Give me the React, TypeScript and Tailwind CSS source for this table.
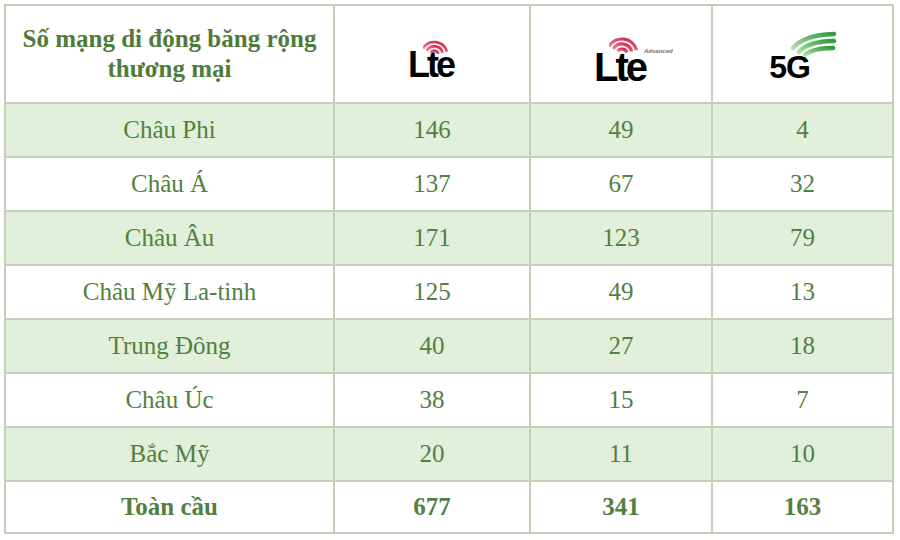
import React from "react";

interface Row {
  region: string;
  lte: number;
  lteA: number;
  g5: number;
}

const rows: Row[] = [
  { region: "Châu Phi", lte: 146, lteA: 49, g5: 4 },
  { region: "Châu Á", lte: 137, lteA: 67, g5: 32 },
  { region: "Châu Âu", lte: 171, lteA: 123, g5: 79 },
  { region: "Châu Mỹ La-tinh", lte: 125, lteA: 49, g5: 13 },
  { region: "Trung Đông", lte: 40, lteA: 27, g5: 18 },
  { region: "Châu Úc", lte: 38, lteA: 15, g5: 7 },
  { region: "Bắc Mỹ", lte: 20, lteA: 11, g5: 10 },
];

// arc path helper: center, radius, start/end angle in degrees (0 = right, 90 = up)
const arc = (cx: number, cy: number, r: number, a1: number, a2: number) => {
  const rad = (a: number) => (a * Math.PI) / 180;
  const x1 = cx + r * Math.cos(rad(a1));
  const y1 = cy - r * Math.sin(rad(a1));
  const x2 = cx + r * Math.cos(rad(a2));
  const y2 = cy - r * Math.sin(rad(a2));
  return `M${x1.toFixed(2)} ${y1.toFixed(2)} A${r} ${r} 0 0 1 ${x2.toFixed(2)} ${y2.toFixed(2)}`;
};

const LteArcs = ({ w }: { w: number }) => (
  <svg width={w} height={w * 0.8} viewBox="0 0 30 24">
    <defs>
      <linearGradient id={`lg${w}`} x1="0" y1="1" x2="1" y2="0">
        <stop offset="0" stopColor="#f39ab0" />
        <stop offset="1" stopColor="#d8163f" />
      </linearGradient>
    </defs>
    {[5, 10, 15].map((r) => (
      <path key={r} d={arc(13, 22, r, 150, 15)} stroke={`url(#lg${w})`} strokeWidth="3.2" fill="none" />
    ))}
  </svg>
);

const logoFont = { fontFamily: '"Liberation Sans", Arial, sans-serif' };

const LteLogo = () => (
  <div className="relative inline-flex flex-col items-center">
    <div className="ml-[8px] -mb-[6px]">
      <LteArcs w={26} />
    </div>
    <span className="text-[36px] leading-[30px] font-bold tracking-[-3px] text-black pr-[3px]" style={logoFont}>
      Lte
    </span>
  </div>
);

const LteAdvLogo = () => (
  <div className="relative inline-flex flex-col items-center">
    <div className="ml-[6px] -mb-[6px]">
      <LteArcs w={30} />
    </div>
    <span className="text-[40px] leading-[34px] font-bold tracking-[-3px] text-black pr-[3px]" style={logoFont}>
      Lte
    </span>
    <span className="absolute left-[50px] top-[16px] text-[6px] leading-[6px] italic text-gray-500" style={logoFont}>
      Advanced
    </span>
  </div>
);

const FiveGLogo = () => (
  <div className="relative inline-flex items-end">
    <span className="text-[32px] leading-[26px] font-bold tracking-[-1px] text-black" style={logoFont}>
      5G
    </span>
    <svg width="48" height="26" viewBox="0 0 48 26" className="absolute left-[21px] -top-[23px]">
      <defs>
        <linearGradient id="g5" x1="0" y1="1" x2="1" y2="0">
          <stop offset="0" stopColor="#b4e2ac" />
          <stop offset="1" stopColor="#2e9a3e" />
        </linearGradient>
      </defs>
      <path d="M3 17 Q14 4 44 3" stroke="url(#g5)" strokeWidth="4.5" fill="none" strokeLinecap="round" />
      <path d="M9 21 Q19 10 44 10" stroke="url(#g5)" strokeWidth="4.5" fill="none" strokeLinecap="round" />
      <path d="M15 24 Q23 17 43 17" stroke="url(#g5)" strokeWidth="4.5" fill="none" strokeLinecap="round" />
    </svg>
  </div>
);

const cellBorder = "border-2 border-[#c2d0ba]";

export default function App() {
  return (
    <div className="min-h-[540px] w-[900px] bg-white pt-[4px] pl-[4px]" style={{ fontFamily: '"Liberation Serif", "Times New Roman", serif' }}>
      <table className="border-collapse table-fixed w-[888px] text-[#52803f]">
        <colgroup>
          <col className="w-[329px]" />
          <col className="w-[196px]" />
          <col className="w-[182px]" />
          <col className="w-[181px]" />
        </colgroup>
        <thead>
          <tr className="h-[98px]">
            <th className={`${cellBorder} text-[25px] leading-[30px] font-bold text-[#4f7b38] px-1`}>
              Số mạng di động băng rộng thương mại
            </th>
            <th className={cellBorder}>
              <div className="flex justify-center pt-[8px]">
                <LteLogo />
              </div>
            </th>
            <th className={cellBorder}>
              <div className="flex justify-center pt-[8px]">
                <LteAdvLogo />
              </div>
            </th>
            <th className={cellBorder}>
              <div className="flex justify-center pt-[26px] pr-[26px]">
                <FiveGLogo />
              </div>
            </th>
          </tr>
        </thead>
        <tbody className="text-[25px]">
          {rows.map((r, i) => (
            <tr key={r.region} className={`h-[54px] ${i % 2 === 0 ? "bg-[#e2efda]" : "bg-white"}`}>
              <td className={`${cellBorder} text-center`}>{r.region}</td>
              <td className={`${cellBorder} text-center`}>{r.lte}</td>
              <td className={`${cellBorder} text-center`}>{r.lteA}</td>
              <td className={`${cellBorder} text-center`}>{r.g5}</td>
            </tr>
          ))}
          <tr className="h-[52px] bg-white font-bold">
            <td className={`${cellBorder} text-center`}>Toàn cầu</td>
            <td className={`${cellBorder} text-center`}>677</td>
            <td className={`${cellBorder} text-center`}>341</td>
            <td className={`${cellBorder} text-center`}>163</td>
          </tr>
        </tbody>
      </table>
    </div>
  );
}
